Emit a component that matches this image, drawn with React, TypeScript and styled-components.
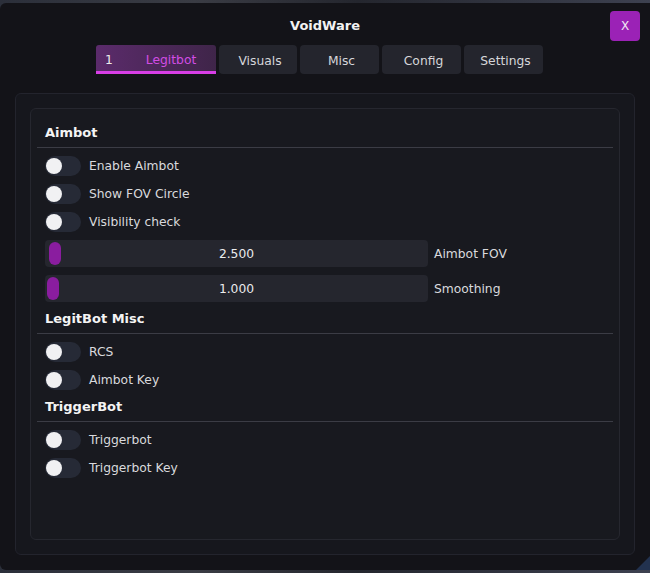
import React from "react";
import styled, { createGlobalStyle } from "styled-components";

const GlobalStyle = createGlobalStyle`
  html, body {
    margin: 0;
    padding: 0;
    background: linear-gradient(90deg, #2b2f3a 0%, #3a3c44 30%, #24262e 55%, #3d4150 100%);
    font-family: "DejaVu Sans", Verdana, sans-serif;
  }
`;

const Window = styled.div`
  position: relative;
  margin-top: 3px;
  height: 567px;
  width: 656px;
  background: #131318;
  border-radius: 6px;
  box-sizing: border-box;
  display: flex;
  flex-direction: column;
  align-items: stretch;
  overflow: hidden;
`;

const TitleBar = styled.div`
  height: 42px;
  display: flex;
  align-items: center;
  justify-content: center;
  padding-right: 6px;
`;

const Title = styled.h1`
  margin: 0;
  font-size: 13px;
  font-weight: bold;
  color: #f2f2f2;
  line-height: 16px;
  padding-top: 4px;
`;

const CloseButton = styled.button`
  position: absolute;
  top: 8px;
  left: 610px;
  width: 30px;
  height: 30px;
  border: none;
  border-radius: 4px;
  background: #9b22b6;
  color: #f0e6f2;
  font-family: "DejaVu Sans", Verdana, sans-serif;
  font-size: 12px;
  padding: 0;
`;

const Tabs = styled.div`
  display: flex;
  gap: 3px;
  padding-left: 96px;
  height: 29px;
`;

const Tab = styled.div<{ $active?: boolean; $w: number }>`
  width: ${(p) => p.$w}px;
  height: 29px;
  box-sizing: border-box;
  display: flex;
  align-items: center;
  justify-content: ${(p) => (p.$active ? "flex-start" : "center")};
  padding: ${(p) => (p.$active ? "3px 0 0 9px" : "2px 0 0 4px")};
  font-size: 12.3px;
  color: ${(p) => (p.$active ? "#d24de4" : "#d6d6da")};
  border-radius: ${(p) => (p.$active ? "3px 3px 0 0" : "4px")};
  background: ${(p) =>
    p.$active ? "linear-gradient(90deg, #5b2b6b 0%, #3f2549 100%)" : "#24252d"};
  border-bottom: ${(p) => (p.$active ? "3px solid #d83ee6" : "none")};
`;

const TabIndex = styled.span`
  color: #ececec;
  margin-right: 33px;
`;

const OuterPanel = styled.div`
  margin: 19px 21px 0 15px;
  height: 462px;
  box-sizing: border-box;
  border: 1px solid #23242d;
  border-radius: 6px;
  background: #16171d;
  padding: 14px 14px;
`;

const InnerPanel = styled.div`
  height: 100%;
  box-sizing: border-box;
  border: 1px solid #26272f;
  border-radius: 6px;
  background: #18191f;
  padding: 14px 6px 0 6px;
  display: flex;
  flex-direction: column;
  gap: 7px;
`;

const Section = styled.div`
  display: flex;
  flex-direction: column;
  gap: 8px;
`;

const SectionHeader = styled.div`
  padding: 0 0 4px 8px;
  height: 20px;
  line-height: 20px;
  font-size: 13px;
  font-weight: bold;
  color: #f4f4f4;
  border-bottom: 1px solid #3b3c45;
`;

const Row = styled.div`
  display: flex;
  align-items: center;
  height: 20px;
  padding-left: 8px;
  gap: 8px;
  font-size: 12.3px;
  color: #d9d9dd;
`;

const Track = styled.div`
  position: relative;
  width: 36px;
  height: 20px;
  border-radius: 10px;
  background: #262a36;
  flex: none;
`;

const Knob = styled.div`
  position: absolute;
  top: 2px;
  left: 1px;
  width: 16px;
  height: 16px;
  border-radius: 50%;
  background: #f1f1f3;
`;

const SliderRow = styled.div`
  display: flex;
  align-items: center;
  height: 27px;
  padding-left: 8px;
  gap: 6px;
  font-size: 12.3px;
  color: #d9d9dd;
`;

const SliderFrame = styled.div`
  position: relative;
  width: 383px;
  height: 27px;
  border-radius: 4px;
  background: #25262e;
  display: flex;
  align-items: center;
  justify-content: center;
  color: #ececee;
  flex: none;
`;

const Grab = styled.div`
  position: absolute;
  top: 2px;
  width: 12px;
  height: 23px;
  border-radius: 6px;
  background: #8a1d9f;
`;

const ResizeGrip = styled.svg`
  position: absolute;
  left: 636px;
  bottom: 0;
`;

function Toggle({ label }: { label: string }) {
  return (
    <Row>
      <Track>
        <Knob />
      </Track>
      <span>{label}</span>
    </Row>
  );
}

function Slider({ label, value, min, max }: { label: string; value: number; min: number; max: number }) {
  const left = 2 + ((value - min) / (max - min)) * (383 - 4 - 12);
  return (
    <SliderRow>
      <SliderFrame>
        <Grab style={{ left }} />
        <span>{value.toFixed(3)}</span>
      </SliderFrame>
      <span>{label}</span>
    </SliderRow>
  );
}

const tabs = [
  { name: "Legitbot", w: 120 },
  { name: "Visuals", w: 78 },
  { name: "Misc", w: 79 },
  { name: "Config", w: 79 },
  { name: "Settings", w: 79 },
];

export default function App() {
  return (
    <>
      <GlobalStyle />
      <Window>
        <TitleBar>
          <Title>VoidWare</Title>
        </TitleBar>
        <CloseButton>X</CloseButton>
        <Tabs>
          {tabs.map((t, i) =>
            i === 0 ? (
              <Tab key={t.name} $active $w={t.w}>
                <TabIndex>1</TabIndex>
                {t.name}
              </Tab>
            ) : (
              <Tab key={t.name} $w={t.w}>
                {t.name}
              </Tab>
            )
          )}
        </Tabs>
        <OuterPanel>
          <InnerPanel>
            <Section>
              <SectionHeader>Aimbot</SectionHeader>
              <Toggle label="Enable Aimbot" />
              <Toggle label="Show FOV Circle" />
              <Toggle label="Visibility check" />
              <Slider label="Aimbot FOV" value={2.5} min={1} max={250} />
              <Slider label="Smoothing" value={1} min={1} max={20} />
            </Section>
            <Section>
              <SectionHeader>LegitBot Misc</SectionHeader>
              <Toggle label="RCS" />
              <Toggle label="Aimbot Key" />
            </Section>
            <Section>
              <SectionHeader>TriggerBot</SectionHeader>
              <Toggle label="Triggerbot" />
              <Toggle label="Triggerbot Key" />
            </Section>
          </InnerPanel>
        </OuterPanel>
        <ResizeGrip width="14" height="14" viewBox="0 0 14 14">
          <polygon points="14,0 14,14 0,14" fill="#22324f" />
        </ResizeGrip>
      </Window>
    </>
  );
}
